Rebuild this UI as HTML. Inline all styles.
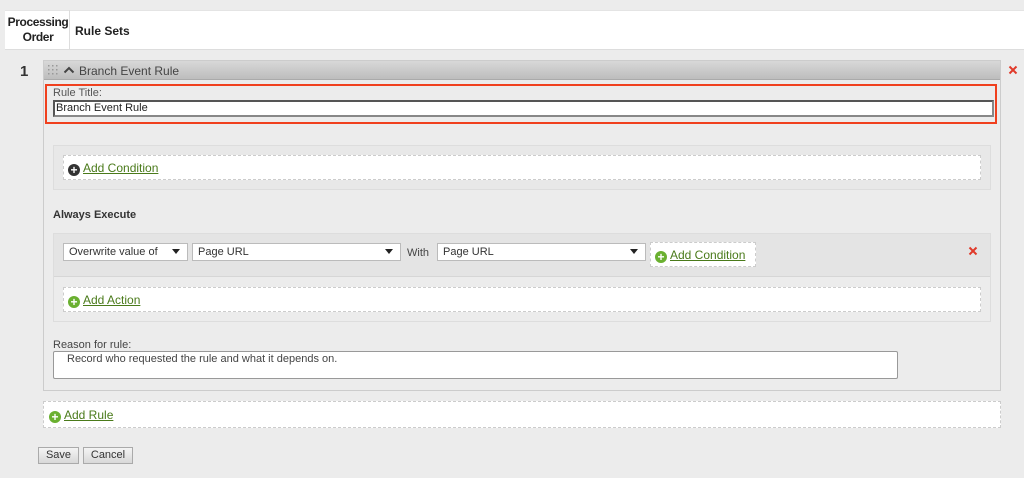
<!DOCTYPE html>
<html><head><style>
*{box-sizing:border-box;margin:0;padding:0}
body{width:1024px;height:478px;background:#ececec;font-family:"Liberation Sans",sans-serif;font-size:11px;color:#333;position:relative;overflow:hidden}
.a{position:absolute}
.dash{background:#fff;border:1px dashed #ccc}
.lnk{color:#4a7a1a;text-decoration:underline;font-size:12px}
.plus{display:inline-block;width:12px;height:12px;border-radius:50%;background:#6ab030;color:#fff;font-weight:bold;font-size:12px;line-height:12px;text-align:center;vertical-align:-2px;margin-right:3px}
.sel{background:#fff;border:1px solid #bbb;height:18px;padding:2px 5px;font-size:11px}
.sel:after{content:"";position:absolute;right:7px;top:5px;border:4px solid transparent;border-top:5px solid #222}
.btn{background:linear-gradient(#f4f4f4,#d8d8d8);border:1px solid #aaa;font-size:11px;text-align:center;line-height:15px}
</style></head><body>
<div class="a" style="left:5px;top:10px;width:1019px;height:40px;background:#fff;border-bottom:1px solid #ddd;border-top:1px solid #e4e4e4"></div>
<div class="a" style="left:69px;top:10px;width:1px;height:40px;background:#ddd"></div>
<div class="a" style="left:6px;top:15px;width:64px;font-weight:bold;font-size:12px;letter-spacing:-0.4px;text-align:center;line-height:15px;color:#222">Processing Order</div>
<div class="a" style="left:75px;top:24px;font-weight:bold;font-size:12px;color:#222">Rule Sets</div>
<div class="a" style="left:20px;top:63px;font-size:15px;font-weight:bold;color:#333">1</div>
<div class="a" style="left:43px;top:60px;width:958px;height:331px;border:1px solid #ccc;background:#ececec"></div>
<div class="a" style="left:44px;top:61px;width:956px;height:19px;background:linear-gradient(#d8d8d8,#bdbdbd);border-bottom:1px solid #aaa"></div>
<svg class="a" style="left:47px;top:64px" width="12" height="12" fill="#999"><g><rect x="1" y="1" width="1.5" height="1.5"/><rect x="5" y="1" width="1.5" height="1.5"/><rect x="9" y="1" width="1.5" height="1.5"/><rect x="1" y="5" width="1.5" height="1.5"/><rect x="5" y="5" width="1.5" height="1.5"/><rect x="9" y="5" width="1.5" height="1.5"/><rect x="1" y="9" width="1.5" height="1.5"/><rect x="5" y="9" width="1.5" height="1.5"/><rect x="9" y="9" width="1.5" height="1.5"/></g></svg>
<svg class="a" style="left:63px;top:66px" width="12" height="8"><path d="M1.5 6.5 L6 2 L10.5 6.5" stroke="#444" stroke-width="2" fill="none"/></svg>
<div class="a" style="left:79px;top:64px;font-size:12px;color:#444">Branch Event Rule</div>
<svg class="a" style="left:1008px;top:65px" width="10" height="10"><path d="M1.5 1.5L8.5 8.5M8.5 1.5L1.5 8.5" stroke="#e03a2a" stroke-width="2"/></svg>
<div class="a" style="left:45px;top:84px;width:952px;height:40px;border:2px solid #f0401e"></div>
<div class="a" style="left:53px;top:87px;font-size:11px;color:#555">Rule Title:</div>
<div class="a" style="left:53px;top:100px;width:941px;height:17px;background:#fff;border:2px solid #555;border-right-color:#888;border-bottom-color:#888;padding:0 1px;font-size:11px;color:#222;line-height:13px">Branch Event Rule</div>
<div class="a" style="left:53px;top:145px;width:938px;height:45px;border:1px solid #ddd;background:#e8e8e8"></div>
<div class="a dash" style="left:63px;top:155px;width:918px;height:25px;padding:5px 4px"><span class="plus" style="background:#333">+</span><span class="lnk">Add Condition</span></div>
<div class="a" style="left:53px;top:209px;font-weight:bold;font-size:11px;color:#333">Always Execute</div>
<div class="a" style="left:53px;top:233px;width:938px;height:89px;border:1px solid #ddd;background:#ececec"></div>
<div class="a" style="left:54px;top:234px;width:936px;height:43px;background:#e4e4e4;border-bottom:1px solid #d6d6d6"></div>
<div class="a sel" style="left:63px;top:243px;width:125px">Overwrite value of</div>
<div class="a sel" style="left:192px;top:243px;width:209px">Page URL</div>
<div class="a" style="left:407px;top:247px;font-size:11px;color:#444">With</div>
<div class="a sel" style="left:437px;top:243px;width:209px">Page URL</div>
<div class="a dash" style="left:650px;top:242px;width:106px;height:25px;padding:5px 4px"><span class="plus">+</span><span class="lnk">Add Condition</span></div>
<svg class="a" style="left:968px;top:246px" width="10" height="10"><path d="M1.5 1.5L8.5 8.5M8.5 1.5L1.5 8.5" stroke="#e03a2a" stroke-width="2"/></svg>
<div class="a dash" style="left:63px;top:287px;width:918px;height:25px;padding:5px 4px"><span class="plus">+</span><span class="lnk">Add Action</span></div>
<div class="a" style="left:53px;top:339px;font-size:11px;color:#444">Reason for rule:</div>
<div class="a" style="left:53px;top:351px;width:845px;height:28px;background:#fff;border:1px solid #999;border-radius:2px;padding:1px 13px;font-size:11px;color:#444">Record who requested the rule and what it depends on.</div>
<div class="a dash" style="left:43px;top:401px;width:958px;height:27px;padding:6px 5px"><span class="plus">+</span><span class="lnk">Add Rule</span></div>
<div class="a btn" style="left:38px;top:447px;width:41px;height:17px">Save</div>
<div class="a btn" style="left:83px;top:447px;width:50px;height:17px">Cancel</div>
</body></html>
